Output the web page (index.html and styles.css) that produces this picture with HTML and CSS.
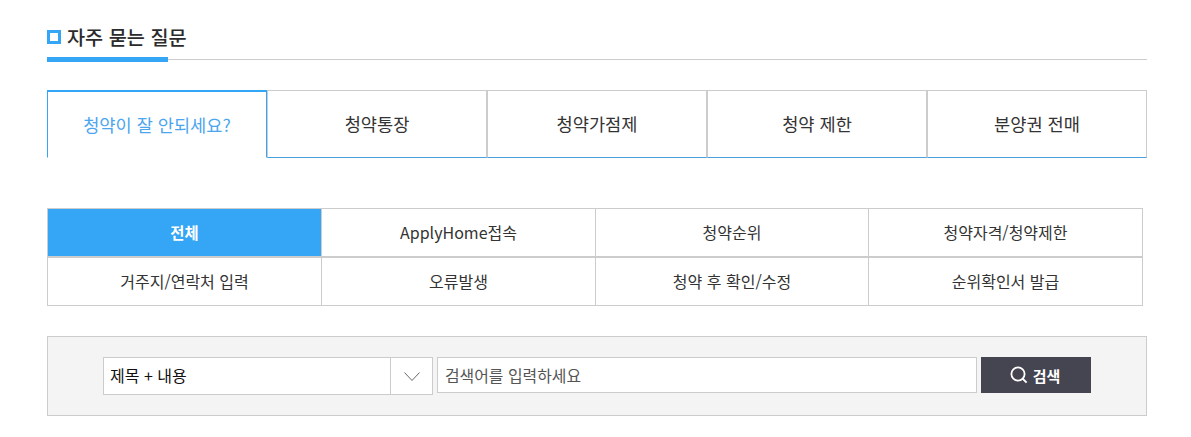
FILE: index.html
```html
<!DOCTYPE html>
<html lang="ko">
<head>
<meta charset="utf-8">
<title>자주 묻는 질문</title>
<link rel="stylesheet" href="styles.css">
</head>
<body>
<main class="page">
  <header class="heading">
    <span class="bullet"></span>
    <h2 class="heading-text">자주 묻는 질문</h2>
  </header>
  <nav class="tabs">
    <a class="tab active">청약이 잘 안되세요?</a>
    <a class="tab">청약통장</a>
    <a class="tab">청약가점제</a>
    <a class="tab">청약 제한</a>
    <a class="tab">분양권 전매</a>
  </nav>
  <div class="cats">
    <a class="cat on">전체</a>
    <a class="cat">ApplyHome접속</a>
    <a class="cat">청약순위</a>
    <a class="cat">청약자격/청약제한</a>
    <a class="cat">거주지/연락처 입력</a>
    <a class="cat">오류발생</a>
    <a class="cat">청약 후 확인/수정</a>
    <a class="cat">순위확인서 발급</a>
  </div>
  <form class="search">
    <div class="select">
      <span class="select-label">제목 + 내용</span>
      <span class="select-arrow"><svg width="16" height="9" viewBox="0 0 16 9"><path d="M.5.5 8 8.5 15.5.5" fill="none" stroke="#666" stroke-width="1"/></svg></span>
    </div>
    <div class="input">검색어를 입력하세요</div>
    <button class="btn" type="button"><svg width="18" height="18" viewBox="0 0 18 18"><circle cx="8" cy="8" r="6.6" fill="none" stroke="#fff" stroke-width="1.8"/><path d="M12.6 12.6 16.6 16.6" stroke="#fff" stroke-width="2"/></svg>검색</button>
  </form>
</main>
</body>
</html>
```
FILE: styles.css
```css
* { box-sizing: border-box; }
html, body { margin: 0; padding: 0; background: #fff; }
body { font-family: "Noto Sans CJK KR", "Noto Sans", sans-serif; color: #333; height: 437px; overflow: hidden; }
.page { width: 1100px; margin: 0 0 0 47px; padding-top: 20px; }
.heading { position: relative; height: 40px; border-bottom: 1px solid #ccc; display: flex; align-items: center; gap: 6px; padding-bottom: 6px; }
.heading::after { content: ""; position: absolute; left: 0; bottom: -3px; width: 121px; height: 5px; background: #35a5f5; }
.bullet { width: 14px; height: 14px; border: 3px solid #35a5f5; background: #fff; }
.heading-text { margin: 0; font-size: 19.7px; font-weight: 500; color: #2b2b2b; line-height: 1; }
.tabs { display: flex; margin-top: 30px; height: 68px; }
.tab { flex: 0 0 220px; display: flex; align-items: center; justify-content: center; font-size: 17.6px; font-weight: 400; color: #333; border: 1px solid #ccc; border-bottom-color: #4a9fdc; padding-bottom: 2px; }
.tab.active { color: #4ba6f0; border-color: #35a5f5; border-top-width: 2px; border-bottom-color: #fff; padding-bottom: 0; }
.cats { display: grid; grid-template-columns: 273px 274px 273px 274px; width: 1096px; margin-top: 50px; border: 1px solid #ccc; }
.cat { height: 49px; display: flex; align-items: center; justify-content: center; font-size: 16px; color: #333; border-left: 1px solid #ccc; border-bottom: 2px solid #ccc; padding-bottom: 1px; }
.cat:nth-child(4n+1) { border-left: 0; }
.cat:nth-child(n+5) { border-bottom: 0; height: 47px; }
.cat.on { background: #35a5f5; color: #fff; font-weight: 700; font-size: 15.4px; }
.search { display: flex; justify-content: center; align-items: flex-start; gap: 4px; margin-top: 30px; height: 80px; background: #f4f4f4; border: 1px solid #ccc; padding-top: 20px; }
.select { display: flex; width: 330px; height: 38px; background: #fff; border: 1px solid #ccc; font-size: 16px; color: #111; }
.select-label { flex: 1; display: flex; align-items: center; padding-left: 6px; padding-bottom: 2px; }
.select-arrow { width: 42px; display: flex; align-items: center; justify-content: center; border-left: 1px solid #ccc; }
.input { width: 540px; height: 36px; background: #fff; border: 1px solid #ccc; font-size: 15.9px; color: #555; display: flex; align-items: center; padding-left: 7px; }
.btn { width: 110px; height: 36px; padding: 0 2px 0 0; background: #454551; border: 0; color: #fff; font: 700 15px "Noto Sans CJK KR", sans-serif; display: flex; align-items: center; justify-content: center; gap: 5px; }
```
